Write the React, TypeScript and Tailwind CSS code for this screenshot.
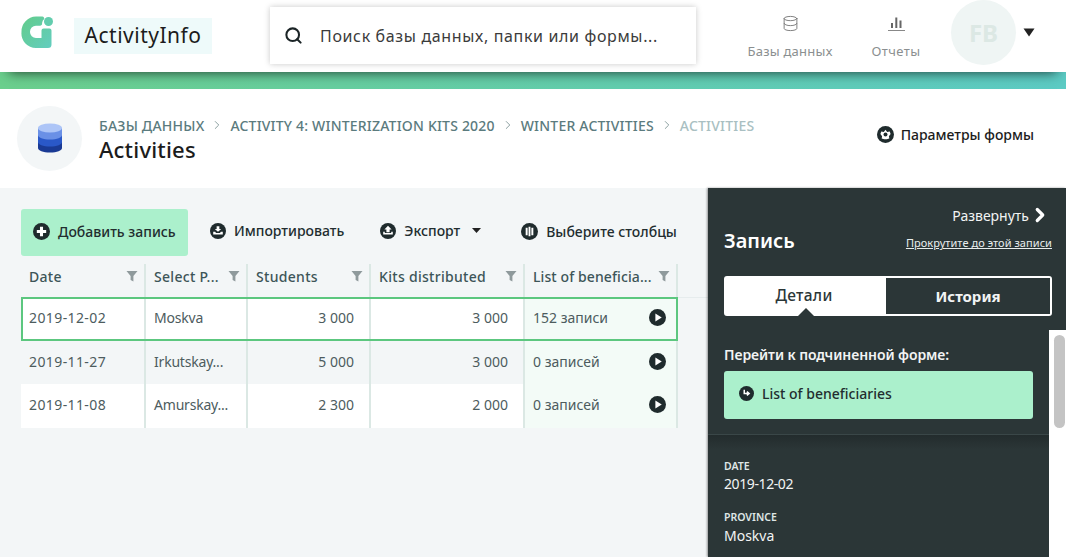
import React from "react";
import { ChevronRight, Search, Database } from "lucide-react";

const Dot = ({ children, size = 17 }: { children: React.ReactNode; size?: number }) => (
  <svg width={size} height={size} viewBox="0 0 20 20" className="shrink-0">
    <circle cx="10" cy="10" r="10" fill="#1f2b2d" />
    {children}
  </svg>
);

const Funnel = () => (
  <svg width="12" height="12" viewBox="0 0 12 12" className="shrink-0">
    <path d="M0.500 1h11L7.400 6v5.500L4.600 10V6z" fill="#8f9a9c" />
  </svg>
);

const Play = () => (
  <Dot>
    <path d="M7.500 5.200v9.600L15 10z" fill="#fff" />
  </Dot>
);

const Th = ({ w, label, tight }: { w: string; label: string; tight?: boolean }) => (
  <div className={`${w} h-[33px] flex items-start justify-between pl-2 pr-[6px] border-r-2 border-[#dbe8e4]`}>
    <span className={`mt-[3px] text-[14px] leading-[20px] font-medium text-[#3d5558] whitespace-nowrap ${tight ? "tracking-[0.1px]" : "tracking-[0.3px]"}`}>{label}</span>
    <span className="mt-[6px]"><Funnel /></span>
  </div>
);

const Td = ({ w, right, green, children }: { w: string; right?: boolean; green?: boolean; children: React.ReactNode }) => (
  <div className={`${w} h-full flex items-center px-2 pb-[3px] border-r-2 border-[#dbe8e4] text-[14px] text-[#4d5c5e] whitespace-nowrap ${right ? "justify-end pr-[15px]" : ""} ${green ? "justify-between pr-[10px] bg-[#f3fbf7]" : ""}`}>
    {children}
  </div>
);

const widths = ["w-[125px]", "w-[102px]", "w-[123px]", "w-[154px]", "w-[153px]"];

const Row = ({ cells, h, bg, selected }: { cells: string[]; h: string; bg: string; selected?: boolean }) => (
  <div className={`flex w-[657px] ${h} ${bg} ${selected ? "outline-2 -outline-offset-2 outline-[#5cc77f] relative" : ""}`}>
    <Td w={widths[0]}><span className="tracking-[0.4px]">{cells[0]}</span></Td>
    <Td w={widths[1]}><span className="tracking-[-0.2px]">{cells[1]}</span></Td>
    <Td w={widths[2]} right>{cells[2]}</Td>
    <Td w={widths[3]} right>{cells[3]}</Td>
    <Td w={widths[4]} green>
      <span>{cells[4]}</span>
      <Play />
    </Td>
  </div>
);

export default function App() {
  return (
    <div className="w-[1066px] h-[557px] overflow-hidden flex flex-col bg-[#f3f6f7] text-black font-['Noto_Sans',sans-serif]">
      {/* top bar */}
      <header className="relative z-10 h-[72px] shrink-0 bg-white flex items-start shadow-[0_9px_12px_-9px_rgba(0,0,0,0.75)]">
        <svg width="34" height="34" viewBox="0 0 34 34" className="ml-[21px] mt-[15px] shrink-0">
          <defs>
            <linearGradient id="lg" x1="0" y1="0" x2="1" y2="1">
              <stop offset="0" stopColor="#62cc8a" />
              <stop offset="1" stopColor="#63cdbf" />
            </linearGradient>
          </defs>
          <path d="M15 1.500h6.500a2 2 0 0 1 .5 3.800 8.500 8.500 0 0 0-1 4.200c-.5 1-1.500 1.200-3 1.200h-3a6 6 0 0 0-6 6.300 6 6 0 0 0 6 6h5.500V15.500a2 2 0 0 1 2-2h6a2 2 0 0 1 2 2v14a3.500 3.500 0 0 1-3.500 3.500H15A14.500 14.500 0 0 1 .5 17 15 15 0 0 1 15 1.500z" fill="url(#lg)" />
          <circle cx="27.500" cy="6.500" r="4.500" fill="#63cdae" />
        </svg>
        <div className="ml-[19px] mt-[18px] w-[138px] h-[36px] bg-[#eefafa] flex items-center justify-center text-[21px] text-[#1c1c1c] tracking-[0.5px]">ActivityInfo</div>
        <div className="ml-[58px] mt-[7px] w-[426px] h-[57px] bg-white shadow-[0_0_6px_rgba(0,0,0,0.22)] flex items-center pl-[14px]">
          <Search size={19} strokeWidth={2.6} className="text-[#1b2426]" />
          <span className="ml-[17px] text-[16px] text-[#3b3b3b] tracking-[0.65px] whitespace-nowrap">Поиск базы данных, папки или формы...</span>
        </div>
        <div className="ml-[46px] w-[96px] mt-[15px] flex flex-col items-center">
          <Database size={17} strokeWidth={1.3} className="text-[#777]" />
          <span className="mt-[10px] text-[13px] leading-[18px] tracking-[0.25px] text-[#8b8f90] whitespace-nowrap">Базы данных</span>
        </div>
        <div className="ml-[33px] w-[50px] mt-[15px] flex flex-col items-center">
          <svg width="17" height="17" viewBox="0 0 17 17">
            <path d="M3 8h2v5H3zM7.300 2.500h2V13h-2zM11.500 5.500h2V13h-2z" fill="#666" />
            <path d="M0 15.500h17" stroke="#888" strokeWidth="1" />
          </svg>
          <span className="mt-[10px] text-[13px] leading-[18px] tracking-[0.4px] text-[#8b8f90]">Отчеты</span>
        </div>
        <div className="ml-[30px] w-[65px] h-[65px] rounded-full bg-[#eff5f4] flex items-center justify-center text-[24px] font-bold text-[#dce8e4]">FB</div>
        <svg width="12" height="9" viewBox="0 0 12 9" className="ml-[7px] mt-[28px]">
          <path d="M0.500 0.500h11L6 8.500z" fill="#222" />
        </svg>
      </header>

      {/* green stripe */}
      <div className="h-[17px] shrink-0 bg-gradient-to-r from-[#6bcf8d] to-[#5ccbc4]" />

      {/* title */}
      <div className="h-[99px] shrink-0 bg-white flex items-start">
        <div className="ml-[17px] mt-[17px] w-[65px] h-[65px] rounded-full bg-[#f3f6f7] flex items-center justify-center">
          <svg width="26" height="31" viewBox="0 0 26 31">
            <path d="M1 5v20c0 2.500 5 4.500 12 4.500s12-2 12-4.500V5z" fill="#1a3a94" />
            <path d="M1 5v14c0 2.500 5 4.500 12 4.500s12-2 12-4.500V5z" fill="#2a58c8" />
            <path d="M1 5v7c0 2.500 5 4.500 12 4.500S25 14.500 25 12V5z" fill="#6a90e6" />
            <ellipse cx="13" cy="5" rx="12" ry="4.500" fill="#adc5f7" />
          </svg>
        </div>
        <div className="ml-[17px] mt-[26px] flex flex-col">
          <div className="flex items-center h-[20px] text-[14px] tracking-[0.2px] font-medium text-[#5b7b7e] whitespace-nowrap">
            <span>БАЗЫ ДАННЫХ</span>
            <ChevronRight size={14} strokeWidth={1.5} className="mx-[6px] text-[#7d9294]" />
            <span>ACTIVITY 4: WINTERIZATION KITS 2020</span>
            <ChevronRight size={14} strokeWidth={1.5} className="mx-[6px] text-[#7d9294]" />
            <span>WINTER ACTIVITIES</span>
            <ChevronRight size={14} strokeWidth={1.5} className="mx-[6px] text-[#7d9294]" />
            <span className="text-[#a9bfc2]">ACTIVITIES</span>
          </div>
          <div className="text-[22px] leading-[28px] tracking-[0.2px] font-medium text-[#1c1c1c]">Activities</div>
        </div>
        <div className="ml-auto mr-[32px] mt-[35px] flex items-center text-[14px] text-[#1c1c1c] gap-[7px]">
          <Dot>
            <path d="M10 4.500l2 2.500 3-.5 1 3-2 2.500.5 2.800-3 .7H8.500l-3-.7.5-2.800-2-2.500 1-3 3 .5z" fill="#fff" />
            <circle cx="10" cy="10" r="2.300" fill="#1f2b2d" />
          </Dot>
          <span className="font-medium">Параметры формы</span>
        </div>
      </div>

      {/* body */}
      <div className="flex-1 min-h-0 flex">
        <main className="w-[708px] shrink-0 pt-[21px]">
          <div className="flex items-start pl-[21px] h-[55px] text-[14px] text-[#222d2f] font-medium whitespace-nowrap">
            <div className="w-[167px] h-[47px] rounded-[3px] bg-[#abf0cc] flex items-center pl-[12px] pb-[2px] gap-[8px]">
              <Dot>
                <path d="M8.200 4.500h3.600v3.700h3.700v3.600h-3.700v3.700H8.200v-3.700H4.500V8.200h3.700z" fill="#fff" />
              </Dot>
              <span>Добавить запись</span>
            </div>
            <div className="ml-[22px] h-[43px] flex items-center gap-[8px]">
              <Dot size={16}>
                <path d="M4 11v3.500h12V11h-2.500l-1 1.500h-5l-1-1.500zM8.300 4h3.400v3.500H14l-4 3.500-4-3.500h2.300z" fill="#fff" />
              </Dot>
              <span>Импортировать</span>
            </div>
            <div className="ml-[36px] h-[43px] flex items-center gap-[8px]">
              <Dot size={16}>
                <path d="M4 11v3.500h12V11h-2v1.500H6V11zM10 3.500L14.500 8H12v3.500H8V8H5.500z" fill="#fff" />
              </Dot>
              <span>Экспорт</span>
              <svg width="9" height="5" viewBox="0 0 9 5" className="ml-[4px]"><path d="M0 0h9L4.500 5z" fill="#222" /></svg>
            </div>
            <div className="ml-[40px] h-[45px] flex items-center gap-[8px]">
              <Dot>
                <path d="M5.500 5.500h2.300v9H5.500zM8.900 4.500h2.200v11H8.900zM12.200 5.500h2.300v9h-2.300z" fill="#fff" />
              </Dot>
              <span>Выберите столбцы</span>
            </div>
          </div>

          <div className="flex ml-[21px] border-b border-[#e6eced]">
            <Th w={widths[0]} label="Date" />
            <Th w={widths[1]} label="Select P..." />
            <Th w={widths[2]} label="Students" />
            <Th w={widths[3]} label="Kits distributed" />
            <Th w={widths[4]} label="List of beneficia..." tight />
          </div>
          <div className="pl-[21px] -mt-[1px]">
            <Row selected h="h-[44px]" bg="bg-white" cells={["2019-12-02", "Moskva", "3 000", "3 000", "152 записи"]} />
            <Row h="h-[43px]" bg="bg-[#f3f6f7]" cells={["2019-11-27", "Irkutskay...", "5 000", "3 000", "0 записей"]} />
            <Row h="h-[44px]" bg="bg-white" cells={["2019-11-08", "Amurskay...", "2 300", "2 000", "0 записей"]} />
          </div>
        </main>

        {/* side panel */}
        <aside className="relative w-[358px] shrink-0 bg-[#2b3637] text-white shadow-[-1px_0_2px_rgba(0,0,0,0.4)] flex flex-col">
          <div className="h-[247px] shrink-0 border-b border-[#3a4748] pl-[16px] pr-[14px]">
            <div className="pt-[16px] pr-[1px] flex items-center justify-end h-[38px] text-[14px] text-[#f2f4f4]">
              <span>Развернуть</span>
              <ChevronRight size={22} strokeWidth={3.5} className="text-white" />
            </div>
            <div className="flex items-center justify-between h-[29px]">
              <span className="text-[20px] font-semibold">Запись</span>
              <span className="mt-[6px] text-[11px] tracking-[0.05px] underline text-[#e8eded]">Прокрутите до этой записи</span>
            </div>
            <div className="mt-[21px] relative flex w-[328px] h-[40px] rounded-[3px] border-2 border-white bg-white">
              <div className="w-[160px] flex items-center justify-center pr-[4px] text-[15.500px] tracking-[0.3px] font-medium text-[#2b3637]">Детали</div>
              <div className="flex-1 bg-[#2b3637] flex items-center justify-center text-[15px] font-bold text-[#f2f4f4]">История</div>
              <span className="absolute left-[72px] -bottom-[2px] border-x-[8px] border-b-[8px] border-x-transparent border-b-[#2b3637]" />
            </div>
            <div className="mt-[30px] text-[14px] leading-[18px] font-semibold tracking-[-0.07px] text-[#f2f4f4] whitespace-nowrap">Перейти к подчиненной форме:</div>
            <div className="mt-[7px] w-[309px] h-[48px] rounded-[3px] bg-[#abf0cc] flex items-center pl-[15px] pb-[4px] gap-[8px] text-[14px] text-[#222d2f]">
              <Dot size={15}>
                <path d="M7 5v5h6M10.500 7.500L13.500 10l-3 2.500" stroke="#fff" strokeWidth="2" fill="none" />
              </Dot>
              <span className="font-medium">List of beneficiaries</span>
            </div>
          </div>
          <div className="flex-1 min-h-0 pl-[16px] bg-gradient-to-b from-[#232c2d] to-[#2b3637] to-[12%]">
            <div className="mt-[24px] text-[10.500px] leading-[14px] font-semibold text-[#dfe6e6]">DATE</div>
            <div className="text-[14px] leading-[22px] tracking-[-0.4px] text-[#f2f4f4]">2019-12-02</div>
            <div className="mt-[15px] text-[10.500px] leading-[14px] font-semibold text-[#dfe6e6]">PROVINCE</div>
            <div className="mt-[1px] text-[14px] leading-[22px] text-[#f2f4f4]">Moskva</div>
          </div>
          <div className="absolute right-0 top-[142px] bottom-0 w-[17px] bg-white flex justify-end pr-[1px] pt-[5px]">
            <div className="w-[11px] h-[93px] rounded-full bg-[#c4c4c4]" />
          </div>
        </aside>
      </div>
    </div>
  );
}
